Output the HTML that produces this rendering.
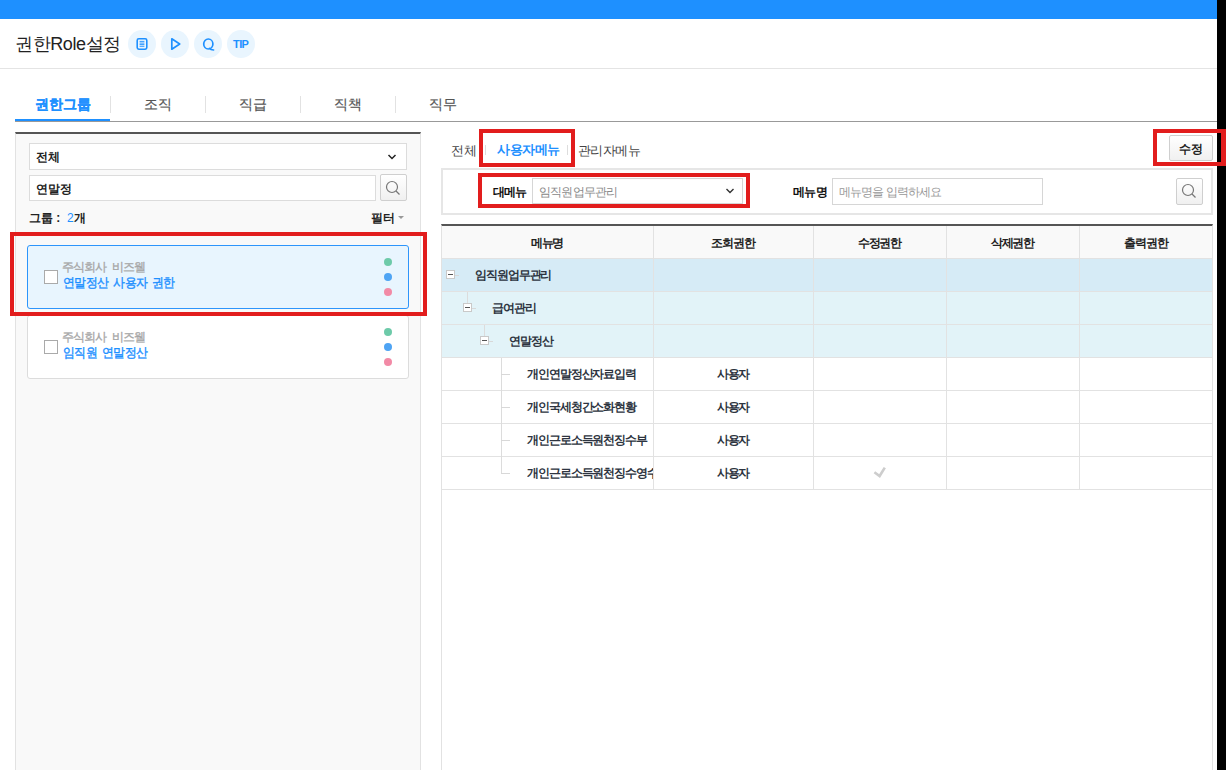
<!DOCTYPE html>
<html><head><meta charset="utf-8">
<style>
*{box-sizing:border-box;margin:0;padding:0}
html,body{width:1226px;height:770px;overflow:hidden;background:#fff;font-family:"Liberation Sans",sans-serif;color:#222}
.a{position:absolute}
#topbar{left:0;top:0;width:1226px;height:19px;background:#1e90ff}
#title{left:15px;top:32px;font-size:18px;letter-spacing:-0.4px;line-height:24px;color:#222;white-space:nowrap}
.circ{top:30px;width:28px;height:28px;border-radius:50%;background:#e9f5fe}
#hline1{left:0;top:68px;width:1217px;height:1px;background:#e4e4e4}
.tab{top:94px;width:95px;height:24px;line-height:20px;text-align:center;font-size:14px;color:#555;-webkit-text-stroke-width:0.2px}
.tabsep{top:96px;width:1px;height:17px;background:#e2e2e2}
#tabline{left:15px;top:121px;width:1202px;height:1px;background:#999}
#tabact{left:15px;top:119px;width:95px;height:2px;background:#1e90ff}
#lpanel{left:15px;top:132px;width:406px;height:640px;background:#f9f9f9;border-left:1px solid #e2e2e2;border-right:1px solid #e2e2e2;border-top:2px solid #555}
.box{background:#fff;border:1px solid #dcdcdc}
.lbl{font-size:12px;color:#222;white-space:nowrap}
.card{left:27px;width:382px;height:64px;border:1px solid #dcdcdc;border-radius:3px;background:#fff}
.card.sel{background:#e8f5fe;border-color:#2d95fb}
.chk{width:14px;height:14px;border:1px solid #aaa;background:#fff}
.dot{width:8px;height:8px;border-radius:50%}
.red{border:4px solid #e21d1d}
.sub{font-size:12px;color:#a6a6a6;white-space:nowrap;letter-spacing:-0.9px;word-spacing:3px;margin-left:-1px;-webkit-text-stroke:0.3px #a6a6a6}
.ttl{font-size:13px;color:#1e90ff;white-space:nowrap;letter-spacing:-0.5px;word-spacing:2px;transform:scaleX(0.91);transform-origin:0 0;-webkit-text-stroke:0.4px #1e90ff}
.btn{border:1px solid #cfcfcf;border-radius:2px;background:linear-gradient(#fff,#f0f0f0)}
.th{text-align:center;letter-spacing:-1.1px;font-size:12px;font-weight:bold;color:#222}
.xb{width:9px;height:9px;border:1px solid #c9c9c9;background:#fff}
.xb:after{content:"";position:absolute;left:1px;top:3px;width:5px;height:1px;background:#555}
.hl{height:1px;background:#d8d8d8}
.vl{width:1px;background:#dcdcdc}
.td{letter-spacing:-1.1px;font-size:12px;color:#2d3440;white-space:nowrap}
.b{font-weight:bold}
</style></head><body>
<div id="topbar" class="a"></div>
<div id="black" class="a" style="left:1217px;top:0;width:9px;height:770px;background:#000"></div>

<div id="title" class="a">권한Role설정</div>
<div class="a circ" style="left:128px"></div>
<div class="a circ" style="left:161px"></div>
<div class="a circ" style="left:194px"></div>
<div class="a circ" style="left:227px"></div>
<svg class="a" style="left:136px;top:38px" width="12" height="13" viewBox="0 0 12 13"><rect x="1.2" y="0.8" width="9.6" height="10.4" rx="1.6" stroke="#1e90ff" stroke-width="1.6" fill="none"/><path d="M3.6 3.4H8.4M3.6 5.1H8.4M3.6 6.6H8.4M3.6 8.3H8.4" stroke="#1e90ff" stroke-width="0.9"/></svg>
<svg class="a" style="left:170px;top:37px" width="12" height="14" viewBox="0 0 12 14"><path d="M1.8 1.8 L9.7 7 L1.8 12.2 Z" stroke="#1e90ff" stroke-width="1.7" stroke-linejoin="round" fill="none"/></svg>
<svg class="a" style="left:202px;top:38px" width="14" height="14" viewBox="0 0 14 14"><ellipse cx="6.3" cy="6" rx="4.6" ry="5" stroke="#1e90ff" stroke-width="1.7" fill="none"/><path d="M7.4 10.3 Q8.6 11.9 11.6 12" stroke="#1e90ff" stroke-width="1.6" fill="none" stroke-linecap="round"/></svg>
<div class="a" style="left:227px;top:36px;width:28px;text-align:center;font-size:11px;line-height:16px;font-weight:bold;color:#1e90ff;letter-spacing:-0.6px;text-indent:-0.6px">TIP</div>
<div id="hline1" class="a"></div>

<div class="a tab" style="left:15px;color:#1e90ff;font-weight:bold">권한그룹</div>
<div class="a tabsep" style="left:110px"></div>
<div class="a tab" style="left:110px">조직</div>
<div class="a tabsep" style="left:205px"></div>
<div class="a tab" style="left:205px">직급</div>
<div class="a tabsep" style="left:300px"></div>
<div class="a tab" style="left:300px">직책</div>
<div class="a tabsep" style="left:395px"></div>
<div class="a tab" style="left:395px">직무</div>
<div id="tabline" class="a"></div>
<div id="tabact" class="a"></div>

<div id="lpanel" class="a"></div>
<div class="a box" style="left:29px;top:143px;width:378px;height:27px"></div>
<div class="a lbl" style="left:36px;top:149px;font-weight:bold">전체</div>
<div class="a box" style="left:29px;top:175px;width:347px;height:26px"></div>
<div class="a lbl" style="left:36px;top:181px;font-weight:bold">연말정</div>
<div class="a btn" style="left:380px;top:174px;width:27px;height:27px"></div>
<svg class="a" style="left:384px;top:179px" width="18" height="18" viewBox="0 0 18 18"><circle cx="8" cy="8" r="5.5" stroke="#777" stroke-width="1.2" fill="none"/><path d="M12 12 L15.5 15.5" stroke="#777" stroke-width="1.3"/></svg>
<svg class="a" style="left:387px;top:153px" width="10" height="8" viewBox="0 0 10 8"><path d="M1.5 2 L5 5.5 L8.5 2" stroke="#222" stroke-width="1.5" fill="none"/></svg>
<div class="a lbl" style="left:29px;top:210px;font-weight:bold">그룹 : &nbsp;<span style="color:#1e90ff;font-weight:normal">2</span>개</div>
<div class="a lbl" style="left:371px;top:210px;font-weight:bold;letter-spacing:-0.5px">필터</div><div class="a" style="left:398px;top:216px;width:0;height:0;border-left:3px solid transparent;border-right:3px solid transparent;border-top:3px solid #999"></div>

<div class="a card sel" style="top:245px"></div>
<div class="a chk" style="left:44px;top:270px"></div>
<div class="a sub" style="left:63px;top:259px">주식회사 비즈웰</div>
<div class="a ttl" style="left:63px;top:274px">연말정산 사용자 권한</div>
<div class="a dot" style="left:384px;top:258px;background:#6dcaa9"></div>
<div class="a dot" style="left:384px;top:273px;background:#4ea4f4"></div>
<div class="a dot" style="left:384px;top:288px;background:#f28aa6"></div>

<div class="a card" style="top:315px"></div>
<div class="a chk" style="left:44px;top:340px"></div>
<div class="a sub" style="left:63px;top:329px">주식회사 비즈웰</div>
<div class="a ttl" style="left:63px;top:344px">임직원 연말정산</div>
<div class="a dot" style="left:384px;top:328px;background:#6dcaa9"></div>
<div class="a dot" style="left:384px;top:343px;background:#4ea4f4"></div>
<div class="a dot" style="left:384px;top:358px;background:#f28aa6"></div>

<div class="a red" style="left:10px;top:232px;width:417px;height:84px"></div>

<!-- right side -->
<div class="a" style="left:451px;top:142px;font-size:13px;color:#444;white-space:nowrap">전체</div>
<div class="a" style="left:485px;top:145px;width:1px;height:10px;background:#ddd"></div>
<div class="a" style="left:497px;top:141px;letter-spacing:-0.4px;font-size:13px;color:#1e90ff;font-weight:bold;white-space:nowrap">사용자메뉴</div>
<div class="a" style="left:567px;top:145px;width:1px;height:10px;background:#ddd"></div>
<div class="a" style="left:578px;top:142px;letter-spacing:-0.6px;font-size:13px;color:#444;white-space:nowrap">관리자메뉴</div>
<div class="a btn" style="left:1169px;top:135px;width:44px;height:26px"></div>
<div class="a" style="left:1169px;top:141px;width:44px;text-align:center;font-size:12px;font-weight:bold;color:#222">수정</div>

<div class="a" style="left:441px;top:168px;width:772px;height:47px;border:2px solid #e6e6e6;background:#fff"></div>
<div class="a" style="left:493px;top:184px;letter-spacing:-1px;font-size:12px;font-weight:bold;color:#111;white-space:nowrap">대메뉴</div>
<div class="a box" style="left:532px;top:178px;width:211px;height:26px;border-color:#d6d6d6"></div>
<div class="a" style="left:539px;top:184px;letter-spacing:-0.8px;font-size:12px;color:#888;white-space:nowrap">임직원업무관리</div>
<div class="a" style="left:793px;top:184px;letter-spacing:-0.7px;font-size:12px;font-weight:bold;color:#111;white-space:nowrap">메뉴명</div>
<div class="a box" style="left:832px;top:178px;width:211px;height:27px;border-color:#d6d6d6"></div>
<div class="a" style="left:839px;top:184px;letter-spacing:-0.9px;font-size:12px;color:#999;white-space:nowrap">메뉴명을 입력하세요</div>
<div class="a btn" style="left:1176px;top:178px;width:27px;height:27px"></div>

<svg class="a" style="left:1180px;top:182px" width="18" height="18" viewBox="0 0 18 18"><circle cx="8" cy="8" r="5.5" stroke="#777" stroke-width="1.2" fill="none"/><path d="M12 12 L15.5 15.5" stroke="#777" stroke-width="1.3"/></svg>
<svg class="a" style="left:725px;top:187px" width="10" height="8" viewBox="0 0 10 8"><path d="M1.5 2 L5 5.5 L8.5 2" stroke="#333" stroke-width="1.4" fill="none"/></svg>
<div class="a" style="left:441px;top:224px;width:772px;height:546px;border-left:1px solid #e2e2e2;border-right:1px solid #e2e2e2;border-top:2px solid #555"></div>
<div class="a" style="left:442px;top:226px;width:770px;height:32px;background:#f9f9f9"></div>
<div class="a" style="left:442px;top:259px;width:770px;height:32px;background:#d6ebf6"></div>
<div class="a" style="left:442px;top:292px;width:770px;height:32px;background:#e2f3f8"></div>
<div class="a" style="left:442px;top:325px;width:770px;height:32px;background:#e2f3f8"></div>
<div class="a" style="left:442px;top:358px;width:770px;height:32px;background:#fff"></div>
<div class="a" style="left:442px;top:391px;width:770px;height:32px;background:#fff"></div>
<div class="a" style="left:442px;top:424px;width:770px;height:32px;background:#fff"></div>
<div class="a" style="left:442px;top:457px;width:770px;height:32px;background:#fff"></div>
<div class="a" style="left:442px;top:258px;width:770px;height:1px;background:#e2e2e2"></div>
<div class="a" style="left:442px;top:291px;width:770px;height:1px;background:#e2e2e2"></div>
<div class="a" style="left:442px;top:324px;width:770px;height:1px;background:#e2e2e2"></div>
<div class="a" style="left:442px;top:357px;width:770px;height:1px;background:#e2e2e2"></div>
<div class="a" style="left:442px;top:390px;width:770px;height:1px;background:#e2e2e2"></div>
<div class="a" style="left:442px;top:423px;width:770px;height:1px;background:#e2e2e2"></div>
<div class="a" style="left:442px;top:456px;width:770px;height:1px;background:#e2e2e2"></div>
<div class="a" style="left:442px;top:489px;width:770px;height:1px;background:#e2e2e2"></div>
<div class="a" style="left:653px;top:226px;width:1px;height:263px;background:#e2e2e2"></div>
<div class="a" style="left:813px;top:226px;width:1px;height:263px;background:#e2e2e2"></div>
<div class="a" style="left:946px;top:226px;width:1px;height:263px;background:#e2e2e2"></div>
<div class="a" style="left:1079px;top:226px;width:1px;height:263px;background:#e2e2e2"></div>
<div class="a th" style="left:441px;top:235px;width:212px">메뉴명</div>
<div class="a th" style="left:653px;top:235px;width:160px">조회권한</div>
<div class="a th" style="left:813px;top:235px;width:133px">수정권한</div>
<div class="a th" style="left:946px;top:235px;width:133px">삭제권한</div>
<div class="a th" style="left:1079px;top:235px;width:134px">출력권한</div>


<!-- tree -->
<div class="a xb" style="left:446px;top:270px"></div>
<div class="a hl" style="left:455px;top:275px;width:4px"></div>
<div class="a td b" style="left:475px;top:267px">임직원업무관리</div>
<div class="a vl" style="left:467px;top:292px;height:11px"></div>
<div class="a xb" style="left:463px;top:303px"></div>
<div class="a hl" style="left:472px;top:308px;width:4px"></div>
<div class="a td b" style="left:492px;top:300px">급여관리</div>
<div class="a vl" style="left:484px;top:325px;height:11px"></div>
<div class="a xb" style="left:480px;top:336px"></div>
<div class="a hl" style="left:489px;top:341px;width:4px"></div>
<div class="a td b" style="left:509px;top:333px">연말정산</div>
<div class="a vl" style="left:501px;top:358px;height:99px"></div>
<div class="a vl" style="left:501px;top:457px;height:17px"></div>
<div class="a hl" style="left:501px;top:374px;width:9px"></div>
<div class="a hl" style="left:501px;top:407px;width:9px"></div>
<div class="a hl" style="left:501px;top:440px;width:9px"></div>
<div class="a hl" style="left:501px;top:473px;width:9px"></div>
<div class="a td b" style="left:527px;top:366px">개인연말정산자료입력</div>
<div class="a td b" style="left:527px;top:399px">개인국세청간소화현황</div>
<div class="a td b" style="left:527px;top:432px">개인근로소득원천징수부</div>
<div class="a td b" style="left:527px;top:465px;width:126px;overflow:hidden">개인근로소득원천징수영수증</div>
<div class="a td b" style="left:653px;top:366px;width:160px;text-align:center">사용자</div>
<div class="a td b" style="left:653px;top:399px;width:160px;text-align:center">사용자</div>
<div class="a td b" style="left:653px;top:432px;width:160px;text-align:center">사용자</div>
<div class="a td b" style="left:653px;top:465px;width:160px;text-align:center">사용자</div>
<svg class="a" style="left:872px;top:465px" width="15" height="14" viewBox="0 0 15 14"><path d="M2.4 7.2 L7.6 11 L12.8 2.6" stroke="#cdcdcd" stroke-width="2.6" fill="none"/></svg>
<div class="a red" style="left:479px;top:129px;width:96px;height:38px"></div>
<div class="a red" style="left:478px;top:173px;width:272px;height:35px"></div>
<div class="a red" style="left:1153px;top:129px;width:72px;height:37px"></div>
<div class="a" style="left:1225px;top:129px;width:1px;height:37px;background:#e21d1d"></div>

</body></html>
